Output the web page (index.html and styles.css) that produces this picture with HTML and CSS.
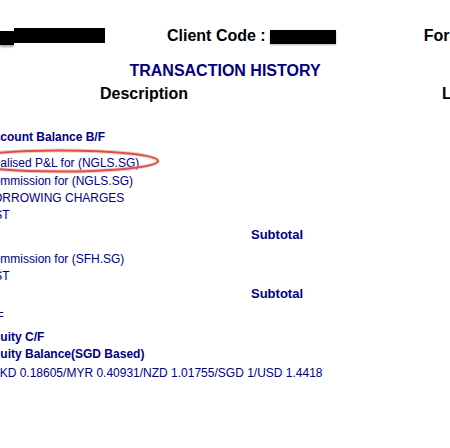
FILE: index.html
```html
<!DOCTYPE html>
<html lang="en">
<head>
<meta charset="utf-8">
<title>Transaction History</title>
<link rel="stylesheet" href="styles.css">
</head>
<body>
<div class="page">
  <header class="top">
    <div class="id-row">
      <span class="redact redact-a"><span class="redact-tail"></span><span class="redact-main"></span></span>
      <span class="label client">Client Code :</span>
      <span class="redact redact-b"></span>
      <span class="label for">For</span>
    </div>
    <h1 class="title">TRANSACTION HISTORY</h1>
    <div class="col-heads">
      <span class="col-desc">Description</span>
      <span class="col-l">L</span>
    </div>
  </header>

  <section class="ledger">
    <div class="row bold">Account Balance B/F</div>
    <div class="row gap-10">Realised P&amp;L for (NGLS.SG)</div>
    <div class="row gap-2">Commission for (NGLS.SG)</div>
    <div class="row gap-1">BORROWING CHARGES</div>
    <div class="row gap-1">GST</div>
    <div class="row sub gap-4">Subtotal</div>
    <div class="row gap-8">Commission for (SFH.SG)</div>
    <div class="row gap-1">GST</div>
    <div class="row sub gap-2">Subtotal</div>
    <div class="row gap-7">B/F</div>
    <div class="row bold gap-4">Equity C/F</div>
    <div class="row bold gap-1">Equity Balance(SGD Based)</div>
    <div class="row rates gap-3">HKD 0.18605/MYR 0.40931/NZD 1.01755/SGD 1/USD 1.4418</div>
  </section>

  <svg class="mark" width="450" height="448" viewBox="0 0 450 448" aria-hidden="true">
    <ellipse cx="60" cy="161" rx="98" ry="10.5" fill="none" stroke="#eba59c" stroke-width="4" opacity="0.55"/>
    <ellipse cx="60" cy="161" rx="98" ry="10.5" fill="none" stroke="#d9534a" stroke-width="2"/>
  </svg>
</div>
</body>
</html>
```

FILE: styles.css
```css
html, body {
  margin: 0;
  padding: 0;
  background: #ffffff;
  overflow: hidden;
}

body {
  font-family: "Liberation Sans", Arial, sans-serif;
}

.page {
  position: relative;
  width: 450px;
  height: 448px;
  overflow: hidden;
}

.top {
  padding-top: 28px;
}

.id-row {
  display: flex;
  align-items: flex-start;
  height: 16px;
  line-height: 16px;
  white-space: nowrap;
}

.label {
  font-size: 16px;
  font-weight: bold;
  color: #000000;
}

.redact {
  display: flex;
  flex: none;
}

.redact-a {
  width: 105px;
}

.redact-tail {
  width: 14px;
  height: 14px;
  margin-top: 3px;
  background: #000000;
  box-shadow: 0 2px 2px rgba(0, 0, 0, 0.35);
}

.redact-main {
  width: 91px;
  height: 15px;
  background: #000000;
}

.client {
  margin-left: 62px;
}

.redact-b {
  width: 66px;
  height: 14px;
  margin-top: 2px;
  margin-left: 4px;
  background: #000000;
  box-shadow: 0 1px 2px rgba(0, 0, 0, 0.3);
}

.for {
  margin-left: 88px;
}

.title {
  margin: 19px 0 0;
  font-size: 16px;
  line-height: 16px;
  font-weight: bold;
  color: #000080;
  text-align: center;
}

.col-heads {
  display: flex;
  margin-top: 7px;
  height: 16px;
  line-height: 16px;
  font-size: 16px;
  font-weight: bold;
  color: #000000;
  white-space: nowrap;
}

.col-desc {
  margin-left: 100px;
  width: 88px;
}

.col-l {
  margin-left: 254px;
}

.ledger {
  margin-top: 27px;
  margin-left: -15px;
  font-size: 12px;
  color: #000080;
}

.row {
  height: 16px;
  line-height: 16px;
  white-space: nowrap;
}

.bold {
  font-weight: bold;
}

.sub {
  padding-left: 266px;
  font-size: 13px;
  font-weight: bold;
}

.rates {
  padding-left: 6px;
}

.gap-1 { margin-top: 1px; }
.gap-2 { margin-top: 2px; }
.gap-3 { margin-top: 3px; }
.gap-4 { margin-top: 4px; }
.gap-7 { margin-top: 7px; }
.gap-8 { margin-top: 8px; }
.gap-10 { margin-top: 10px; }

.mark {
  position: absolute;
  left: 0;
  top: 0;
  pointer-events: none;
}
```
